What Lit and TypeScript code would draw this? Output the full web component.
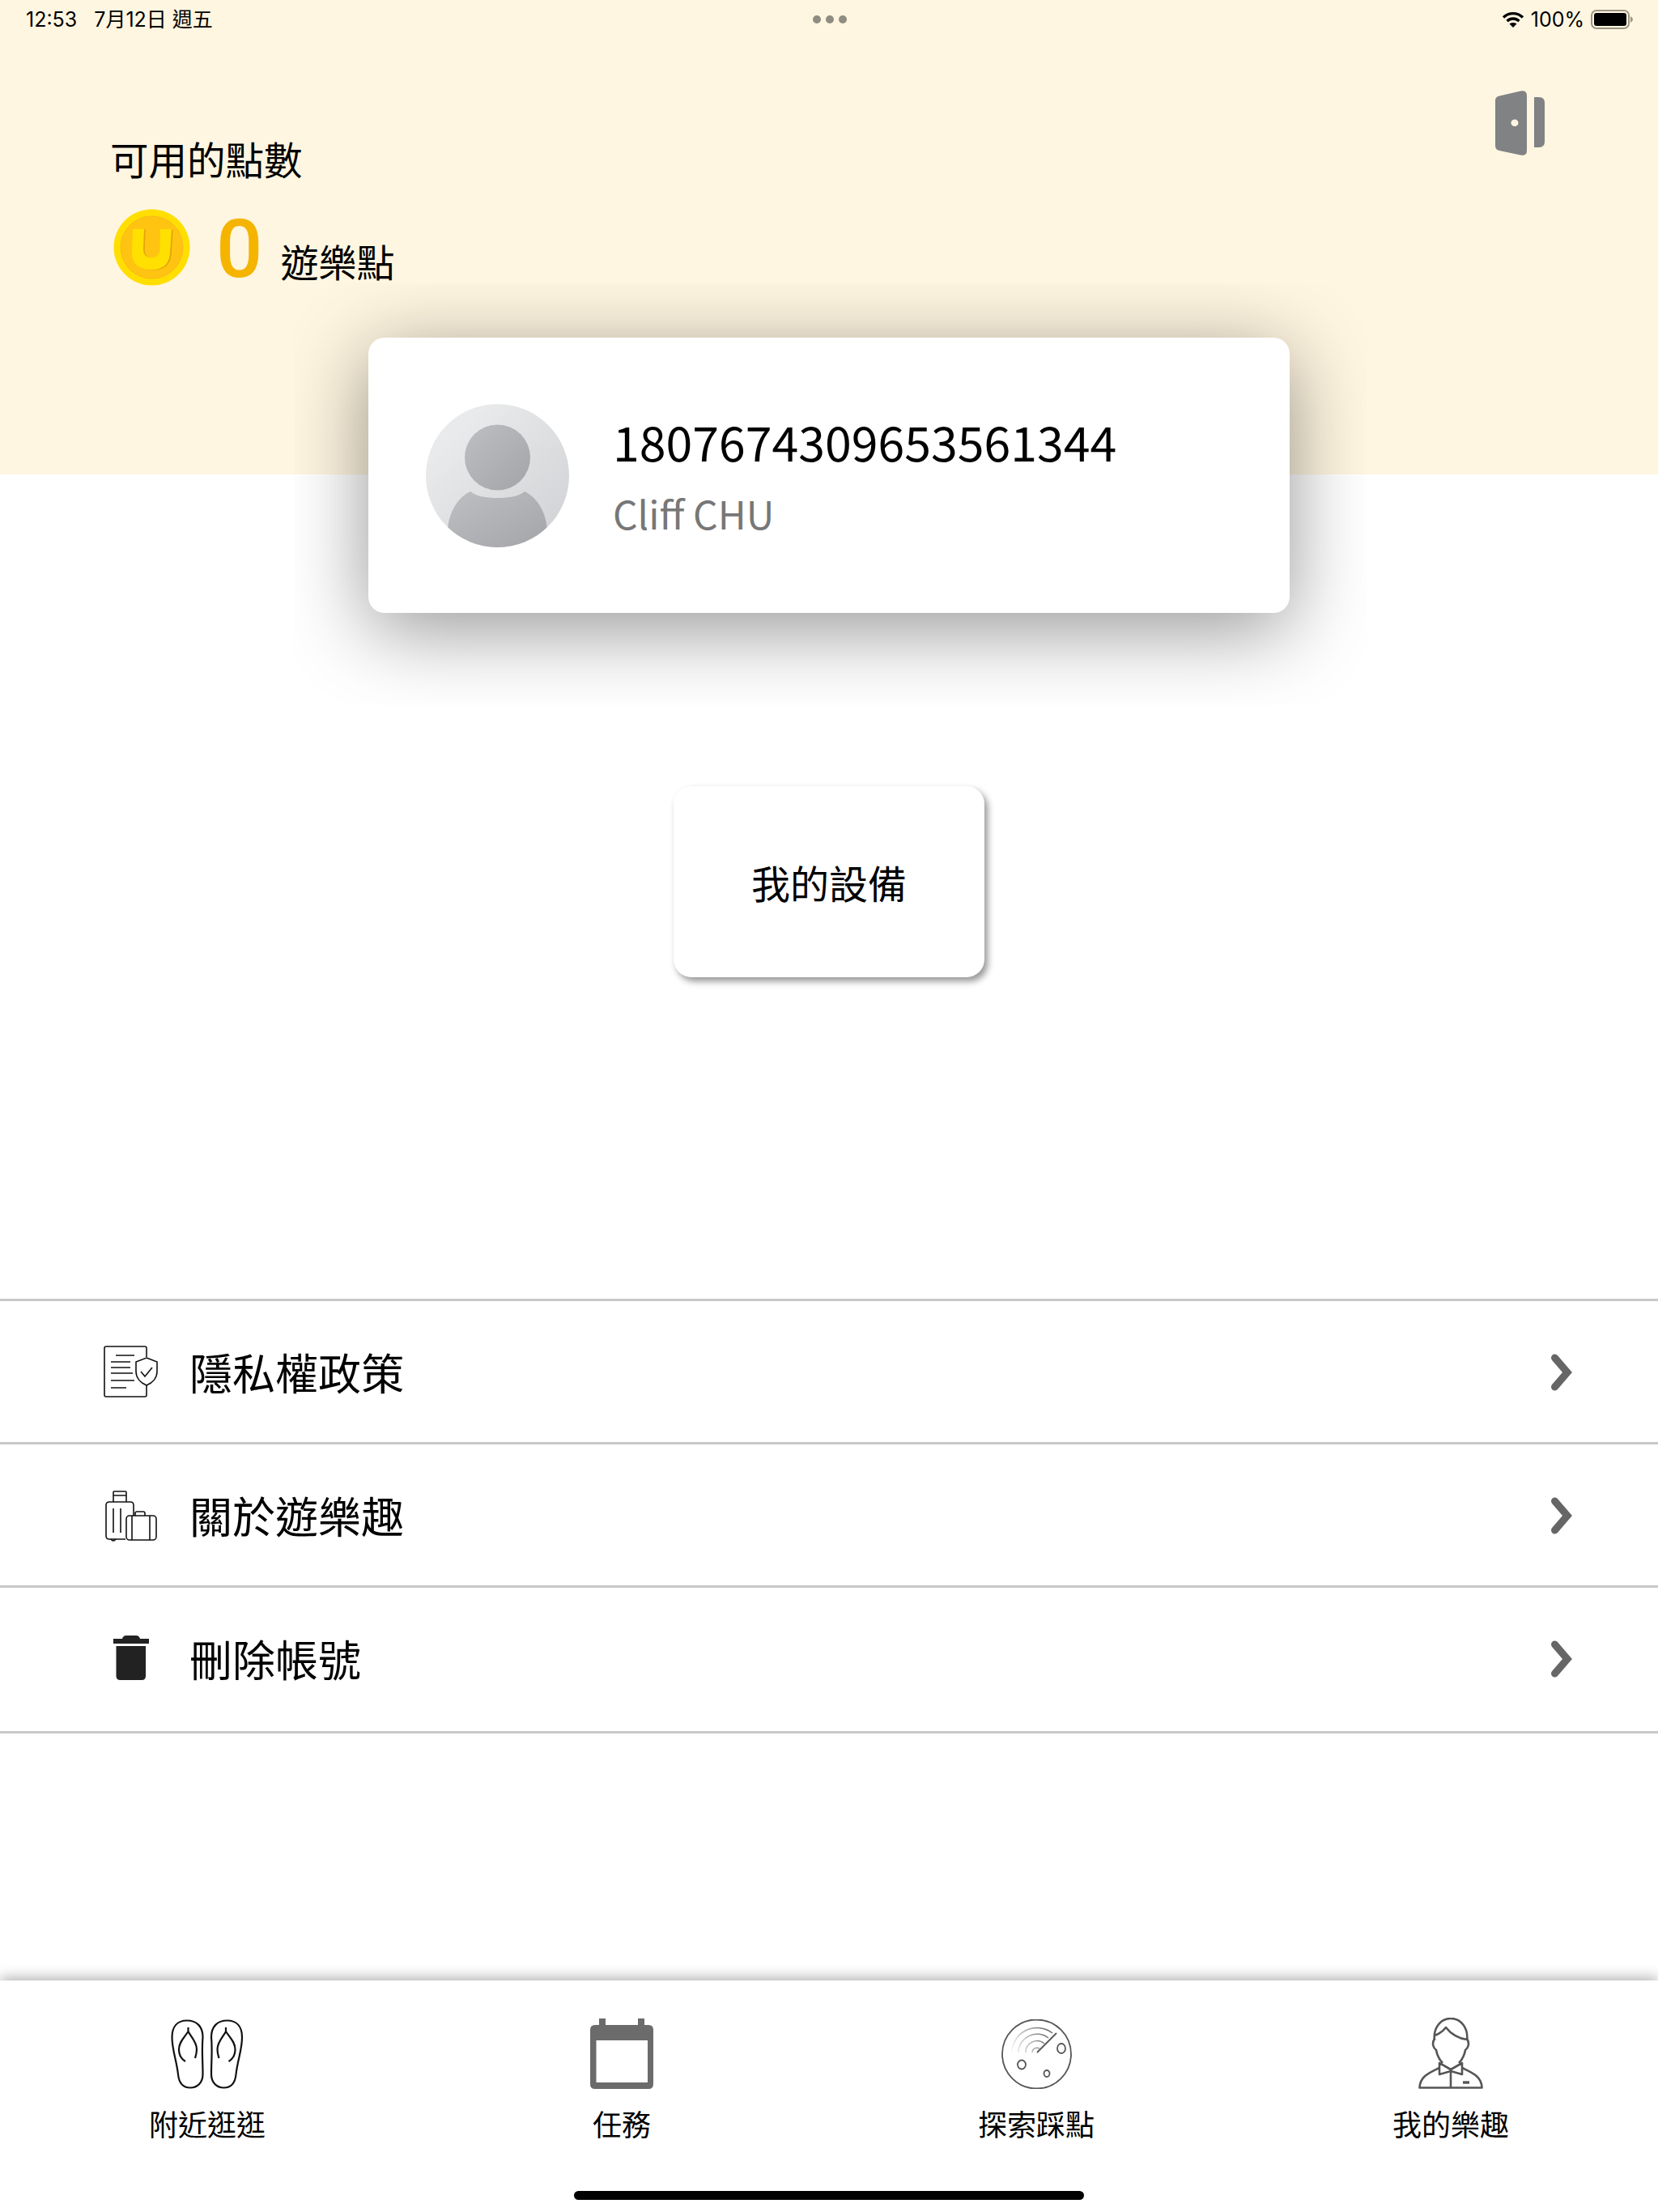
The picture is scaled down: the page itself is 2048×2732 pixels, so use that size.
import { LitElement, html, css, svg } from "lit";
import { customElement } from "lit/decorators.js";

const chevron = html`<svg class="chevron" width="28" height="48" viewBox="0 0 28 48">
  <path d="M5.500 6 L21 24 L5.500 42" fill="none" stroke="#666" stroke-width="9" stroke-linecap="round" stroke-linejoin="miter" />
</svg>`;

const docIcon = html`<svg width="67" height="64" viewBox="0 0 67 64" fill="none" stroke="#111" stroke-width="1.600">
  <path d="M53 14 V3 Q53 1 51 1 H3 Q1 1 1 3 V61 Q1 63 3 63 H51 Q53 63 53 61 V49" />
  <path d="M15 12 H38 M9 20 H33 M9 27 H33 M9 34 H36 M9 43 H38 M9 52 H28" />
  <path d="M53 15 L66 20 V32 C66 40 60 46 53 49 C46 46 40 40 40 32 V20 Z" />
  <path d="M46 32 L51 38 L60 27" />
</svg>`;

const luggageIcon = html`<svg class="luggage" width="64" height="63" viewBox="0 0 64 63" fill="none" stroke="#111" stroke-width="1.600">
  <path d="M25 60 H5 Q1 60 1 56 V18 Q1 14 5 14 H31 Q35 14 35 18 V31" />
  <path d="M10 14 V2 Q10 1 11 1 H25 Q26 1 26 2 V14 M10 6 H26" />
  <path d="M10 22 V52 M19 22 V52" />
  <path d="M7 60 Q10 64 13 60" />
  <rect x="26" y="31" width="37" height="30" rx="4" />
  <path d="M37 31 V28 Q37 26 39 26 H47 Q49 26 49 28 V31 M33 31 V61 M55 31 V61" />
</svg>`;

const trashIcon = html`<svg width="44" height="56" viewBox="0 0 44 56" fill="#222">
  <path d="M11 4 Q12 0 16 0 H28 Q32 0 33 4 H44 V10 H0 V4 Z" />
  <path d="M3.500 13 H40 V50 Q40 55 35 55 H8.500 Q3.500 55 3.500 50 Z" />
</svg>`;

const sandalLeft = svg`
  <path d="M20 1.500 C8 1.500 1.500 9 1.500 22 C1.500 38 7 50 9 68 C10 78 15 84.500 24 84.500 C33 84.500 39.500 78 39.500 68 C39.500 50 38 38 39.500 22 C39.500 9 32 1.500 20 1.500 Z" />
  <path d="M21.500 10 V15 C17 22 10 28 10 37 C10 43 13 49 18 52 M21.500 15 C25 22 32 28 32 37 C32 41 31 45 30 48" />
`;

const tabIcons = [
  html`<svg width="90" height="86" viewBox="0 0 90 86" fill="none" stroke="#111" stroke-width="2.200">
    ${sandalLeft}
    <g transform="translate(89.500 0) scale(-1 1)">${sandalLeft}</g>
  </svg>`,
  html`<svg width="78" height="87" viewBox="0 0 78 87">
    <path fill="#6b6b6b" fill-rule="evenodd" d="M11 0 H19 V8 H59 V0 H67 V8 H72 Q78 8 78 14 V81 Q78 87 72 87 H6 Q0 87 0 81 V14 Q0 8 6 8 H11 Z M7.500 27 V79 H71 V27 Z" />
  </svg>`,
  html`<svg width="87" height="86" viewBox="0 0 87 86" fill="none">
    <defs>
      <linearGradient id="sweep" gradientUnits="userSpaceOnUse" x1="10" y1="40" x2="60" y2="20">
        <stop offset="0" stop-color="#fff" />
        <stop offset="1" stop-color="#666" />
      </linearGradient>
    </defs>
    <circle cx="43.500" cy="43" r="42.500" stroke="#555" stroke-width="1.800" />
    <path d="M44 41 L68 17" stroke="#555" stroke-width="1.800" />
    <path d="M38 41 A6 6 0 0 1 47 36 M30 41 A14 14 0 0 1 53 30 M21 41 A23 23 0 0 1 58 23 M13 41 A31 31 0 0 1 63 17" stroke="url(#sweep)" stroke-width="1.500" />
    <ellipse cx="74" cy="36" rx="5" ry="6" stroke="#555" stroke-width="1.800" />
    <ellipse cx="25" cy="56" rx="5" ry="5.500" stroke="#555" stroke-width="1.800" />
    <ellipse cx="56" cy="67" rx="3.500" ry="4" stroke="#555" stroke-width="1.800" />
  </svg>`,
  html`<svg width="80" height="88" viewBox="0 0 80 88" fill="none" stroke="#555" stroke-width="2.600" stroke-linejoin="round">
    <path d="M20 28 C18 12 28 1 40 1 C52 1 62 12 60 28" />
    <path d="M20 22 C26 20 31 16 34 12 C40 20 50 26 60 27" />
    <path d="M20 26 C16 32 19 38 22 40 C23 46 26 52 30 56 M60 26 C64 32 61 38 58 40 C57 46 54 52 50 56" />
    <path d="M26 56 L40 64 L54 56 V70 L40 66 L26 70 Z" />
    <path d="M26 62 C14 68 2 72 1.500 86.500 H78.500 C78 72 66 68 54 62" />
    <path d="M40 66 V86" />
    <path d="M55 80 H63" stroke-width="3.400" />
  </svg>`,
];

const menu = [
  { icon: docIcon, label: "隱私權政策" },
  { icon: luggageIcon, label: "關於遊樂趣" },
  { icon: trashIcon, label: "刪除帳號" },
];

const tabs = ["附近逛逛", "任務", "探索踩點", "我的樂趣"];

@customElement("app-root")
export class AppRoot extends LitElement {
  static styles = css`
    :host {
      display: block;
      width: 2048px;
      font-family: "Noto Sans CJK TC", "Noto Sans", sans-serif;
      color: #000;
    }

    .page {
      display: flex;
      flex-direction: column;
      height: 2732px;
      background: #fff;
      overflow: hidden;
    }

    .hero {
      height: 586px;
      flex: none;
      background: #fff6e1;
      box-sizing: border-box;
    }

    .status {
      display: grid;
      grid-template-columns: 1fr auto 1fr;
      align-items: center;
      height: 48px;
      padding: 0 31px 0 32px;
      font-family: Inter, "Noto Sans CJK TC", sans-serif;
      font-size: 25px;
    }

    .status-left {
      display: flex;
      align-items: center;
      gap: 21px;
      line-height: 30px;
    }

    .dots {
      display: flex;
      gap: 6px;
    }

    .dots span {
      width: 10px;
      height: 10px;
      border-radius: 50%;
      background: #8f8c80;
    }

    .status-right {
      display: flex;
      justify-content: flex-end;
      align-items: center;
      gap: 8px;
    }

    .hero-body {
      display: flex;
      justify-content: space-between;
      padding: 0 140px 0 136px;
    }

    .door {
      margin-top: 64px;
    }

    .points-title {
      margin-top: 114px;
      font-size: 47.500px;
      line-height: 68px;
    }

    .points {
      display: flex;
      align-items: flex-start;
      margin-top: 24px;
      padding-left: 4px;
    }

    .coin {
      margin-top: 4px;
    }

    .amount {
      margin: 7px 0 0 32px;
      font-size: 101px;
      line-height: 94px;
      font-weight: 500;
      color: #f5b400;
      font-family: Roboto, sans-serif;
    }

    .unit {
      margin: 34px 0 0 22px;
      font-size: 47px;
      line-height: 68px;
    }

    .card-clip {
      flex: none;
      box-sizing: border-box;
      width: 1325px;
      margin: -236px 0 0 363px;
      padding: 67px 95px 114px 92px;
      overflow: hidden;
    }

    .card {
      display: flex;
      align-items: center;
      gap: 54px;
      height: 340px;
      padding: 0 71px;
      box-sizing: border-box;
      background: #fff;
      border-radius: 20px;
      box-shadow: 0 20px 100px rgba(0, 0, 0, 0.42);
    }

    .card-id {
      font-size: 59px;
      line-height: 82px;
      margin-top: -5px;
    }

    .card-name {
      margin-top: 15px;
      font-size: 48px;
      line-height: 64px;
      color: #777;
    }

    .device {
      flex: none;
      display: flex;
      align-items: center;
      justify-content: center;
      width: 384px;
      height: 236px;
      margin: 100px 0 0 832px;
      font-size: 48px;
      background: #fff;
      border-radius: 22px;
      box-shadow: 4px 5px 9px rgba(0, 0, 0, 0.42);
    }

    .menu {
      flex: none;
      margin-top: 397px;
      border-top: 3px solid #c8c8c8;
    }

    .row {
      display: flex;
      align-items: center;
      box-sizing: border-box;
      height: 177px;
      padding: 0 105px 0 128px;
      font-size: 53px;
      border-bottom: 3px solid #c8c8c8;
    }

    .row:last-child {
      height: 180px;
      padding-bottom: 3px;
    }

    .row-icon {
      display: flex;
      justify-content: center;
      width: 67px;
      margin-right: 39px;
    }

    .luggage {
      margin-top: 3px;
    }

    .chevron {
      margin-top: 2px;
    }

    .row-label {
      flex: 1;
    }

    .tabbar {
      display: grid;
      grid-template-columns: repeat(4, 1fr);
      margin-top: auto;
      height: 286px;
      flex: none;
      background: #fff;
      box-shadow: 0 -3px 16px rgba(0, 0, 0, 0.32);
      position: relative;
    }

    .tab {
      display: flex;
      flex-direction: column;
      align-items: center;
      padding-top: 46px;
      font-size: 36px;
    }

    .tab-icon {
      display: flex;
      align-items: flex-end;
      height: 88px;
    }

    .tab-label {
      margin-top: 17px;
      line-height: 50px;
    }

    .home-bar {
      position: absolute;
      left: 709px;
      bottom: 15px;
      width: 630px;
      height: 11px;
      border-radius: 6px;
      background: #000;
    }
  `;

  renderStatus() {
    return html`<div class="status">
      <div class="status-left"><span>12:53</span><span>7月12日 週五</span></div>
      <div class="dots"><span></span><span></span><span></span></div>
      <div class="status-right">
        <svg width="28" height="20" viewBox="0 0 28 20" fill="none" stroke="#000" stroke-width="3.400">
          <path d="M2 7.500 C9 1 19 1 26 7.500" />
          <path d="M6.500 12 C11 8 17 8 21.500 12" />
          <path d="M14 20 L9.500 15.500 C12 13.500 16 13.500 18.500 15.500 Z" fill="#000" stroke="none" />
        </svg>
        <span>100%</span>
        <svg width="52" height="24" viewBox="0 0 52 24">
          <rect x="1" y="1" width="46" height="22" rx="6" fill="none" stroke="#9b9585" stroke-width="2" />
          <rect x="4" y="4" width="40" height="16" rx="3" fill="#000" />
          <path d="M49 8 Q52 10 52 12 Q52 14 49 16 Z" fill="#9b9585" />
        </svg>
      </div>
    </div>`;
  }

  renderCoin() {
    const u = "M24 25 H38 L37 50 Q37 60 47 60 Q57 60 57.500 50 L58 25 H72 L70 54 Q69 75 47 75 Q23 75 23 54 Z";
    return html`<svg class="coin" width="95" height="95" viewBox="0 0 95 95">
      <circle cx="47.500" cy="47.500" r="47" fill="#ffde00" />
      <circle cx="47.500" cy="47.500" r="38.500" fill="#ffc412" stroke="#f8b91c" stroke-width="1" />
      <path d=${u} fill="#e3a50c" transform="translate(1.800 .6)" />
      <path d=${u} fill="#ffe000" />
    </svg>`;
  }

  renderAvatar() {
    return html`<svg width="177" height="177" viewBox="0 0 177 177">
      <defs>
        <linearGradient id="avatar-bg" x1="0" y1="0" x2="1" y2="1">
          <stop offset="0.2" stop-color="#e9eaeb" />
          <stop offset="1" stop-color="#cfd0d3" />
        </linearGradient>
        <linearGradient id="avatar-fg" x1="0" y1="0" x2="1" y2="1">
          <stop offset="0" stop-color="#bebfc2" />
          <stop offset="1" stop-color="#a3a4a8" />
        </linearGradient>
        <clipPath id="avatar-clip"><circle cx="88.500" cy="88.500" r="88.500" /></clipPath>
      </defs>
      <circle cx="88.500" cy="88.500" r="88.500" fill="url(#avatar-bg)" />
      <g clip-path="url(#avatar-clip)" fill="url(#avatar-fg)">
        <circle cx="88.500" cy="66" r="40.500" />
        <path d="M27 180 V155 C29 130 42 114 55 108 C62 114 74 116 88.500 116 C103 116 115 114 122 108 C135 114 148 130 150 155 V180 Z" />
      </g>
    </svg>`;
  }

  render() {
    return html`<div class="page">
      <div class="hero">
        ${this.renderStatus()}
        <div class="hero-body">
          <div>
            <div class="points-title">可用的點數</div>
            <div class="points">
              ${this.renderCoin()}
              <span class="amount">0</span>
              <span class="unit">遊樂點</span>
            </div>
          </div>
          <svg class="door" width="61" height="80" viewBox="0 0 61 80">
            <path fill="#808284" fill-rule="evenodd" d="M5 6.500 L31 .500 Q39 -1 39 6 V74 Q39 81 31 79.500 L5 74 Q0 73 0 68 V12 Q0 7.500 5 6.500 Z M24 35.500 A4.500 4.200 0 1 0 24 44 A4.500 4.200 0 1 0 24 35.500 Z" />
            <path fill="#808284" d="M48 8 H54 Q61 8 61 15 V63 Q61 70 54 70 H48 Z" />
          </svg>
        </div>
      </div>

      <div class="card-clip">
        <div class="card">
          ${this.renderAvatar()}
          <div>
            <div class="card-id">1807674309653561344</div>
            <div class="card-name">Cliff CHU</div>
          </div>
        </div>
      </div>

      <div class="device">我的設備</div>

      <div class="menu">
        ${menu.map(
          (m) => html`<div class="row">
            <span class="row-icon">${m.icon}</span>
            <span class="row-label">${m.label}</span>
            ${chevron}
          </div>`
        )}
      </div>

      <div class="tabbar">
        ${tabs.map(
          (t, i) => html`<div class="tab">
            <div class="tab-icon">${tabIcons[i]}</div>
            <div class="tab-label">${t}</div>
          </div>`
        )}
        <div class="home-bar"></div>
      </div>
    </div>`;
  }
}
